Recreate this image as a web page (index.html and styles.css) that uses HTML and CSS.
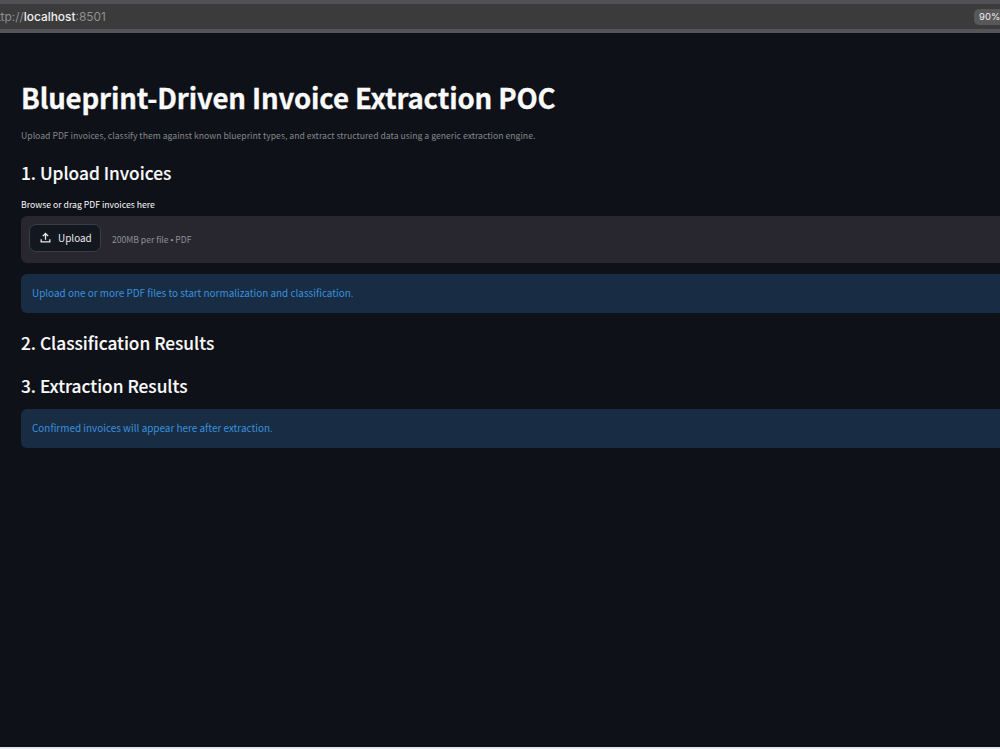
FILE: index.html
```html
<!DOCTYPE html>
<html lang="en">
  <head>
    <meta charset="UTF-8" />
    <meta name="viewport" content="width=device-width, initial-scale=1.0" />
    <title>Invoice Extraction</title>

    <link rel="stylesheet" href="styles.css">
  </head>
  <body>
    <header class="urlbar">
      <div class="url">ttp://<strong>localhost</strong>:8501</div>
      <div class="zoom">90%</div>
    </header>

    <main class="page">
      <h1>Blueprint-Driven Invoice Extraction POC</h1>
      <p class="caption">Upload PDF invoices, classify them against known blueprint types, and extract structured data using a generic extraction engine.</p>

      <section class="upload">
        <h2>1. Upload Invoices</h2>
        <label class="label" for="upload">Browse or drag PDF invoices here</label>
        <div class="dropzone">
          <button id="upload" class="btn">
            <svg class="icon" viewBox="0 0 24 24">
              <path d="M12 16V5M7 9.500L12 4.500L17 9.500M4 15v5h16V15" />
            </svg>
            <span>Upload</span>
          </button>
          <span class="hint">200MB per file • PDF</span>
        </div>
        <div class="alert">Upload one or more PDF files to start normalization and classification.</div>
      </section>

      <section class="classification">
        <h2>2. Classification Results</h2>
      </section>

      <section class="extraction">
        <h2>3. Extraction Results</h2>
        <div class="alert">Confirmed invoices will appear here after extraction.</div>
      </section>
    </main>
  </body>
</html>
```

FILE: styles.css
```css
*,
*::before,
*::after {
  box-sizing: border-box;
  margin: 0;
  padding: 0;
}

body {
  display: flex;
  flex-direction: column;
  height: 749px;
  overflow: hidden;
  background-color: #0e1118;
  border-bottom: 2px solid #e8e8ee;
  color: #fafafa;
  font-family: "Noto Sans CJK JP", "Noto Sans", sans-serif;
}

.urlbar {
  display: flex;
  align-items: center;
  justify-content: space-between;
  height: 33px;
  flex-shrink: 0;
  background-color: #3b3b3c;
  border-top: 4px solid #505055;
  border-bottom: 4px solid #55545a;
  font-family: Inter, sans-serif;
}

.url {
  margin-left: -3px;
  font-size: 11.9px;
  color: #909090;
}

.url strong {
  font-weight: 500;
  color: #f0f0f0;
}

.zoom {
  width: 34px;
  height: 16px;
  margin-right: -8px;
  padding-left: 5px;
  border-radius: 5px;
  background-color: #58585a;
  color: #eee;
  font-size: 9.5px;
  line-height: 16px;
}

.page {
  padding: 46px 0 0 21px;
}

h1 {
  font-size: 27.6px;
  font-weight: 700;
  letter-spacing: -0.15px;
  line-height: 36px;
  -webkit-text-stroke: 0.3px currentColor;
}

.caption {
  margin-top: 13px;
  color: #86878a;
  font-size: 8.68px;
  line-height: 14px;
}

h2 {
  font-size: 17.3px;
  font-weight: 500;
  line-height: 24px;
  -webkit-text-stroke: 0.12px currentColor;
}

.upload {
  margin-top: 19px;
}

.label {
  display: block;
  margin-top: 12px;
  font-size: 8.68px;
  line-height: 14px;
}

.dropzone {
  display: flex;
  align-items: flex-start;
  height: 47px;
  margin-top: 5px;
  padding: 8px;
  border-radius: 6px 0 0 6px;
  background-color: #282730;
}

.btn {
  display: flex;
  align-items: center;
  gap: 6px;
  width: 72px;
  height: 28px;
  padding: 0 0 1px 9px;
  border: 1px solid #3b3c44;
  border-radius: 7px;
  background-color: #131720;
  color: #e8e8e9;
  font-family: inherit;
  font-size: 9.95px;
}

.icon {
  width: 13px;
  height: 13px;
  fill: none;
  stroke: currentColor;
  stroke-width: 2.4;
}

.hint {
  margin-left: 11px;
  color: #8f8f94;
  font-size: 8.6px;
  line-height: 31px;
}

.alert {
  height: 39px;
  margin-top: 11px;
  padding-left: 11px;
  border-radius: 6px 0 0 6px;
  background-color: #182d43;
  color: #3a90df;
  font-size: 9.93px;
  line-height: 38px;
}

.classification {
  margin-top: 18px;
}

.extraction {
  margin-top: 19px;
}
```
